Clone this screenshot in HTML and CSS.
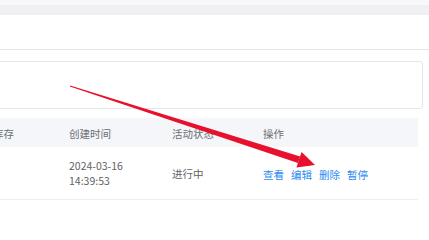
FILE: index.html
```html
<!DOCTYPE html>
<html lang="zh-CN">
<head>
<meta charset="utf-8">
<link rel="stylesheet" href="styles.css">
</head>
<body>
<div class="page">
  <div class="topstrip"></div>
  <div class="band"></div>
  <div class="toolbar"></div>
  <div class="content">
    <div class="filterbox"></div>
    <div class="table">
      <div class="row head">
        <div class="cell c1">库存</div>
        <div class="cell c2">创建时间</div>
        <div class="cell c3">活动状态</div>
        <div class="cell c4">操作</div>
      </div>
      <div class="row body">
        <div class="cell c1"></div>
        <div class="cell c2"><div>2024-03-16</div><div>14:39:53</div></div>
        <div class="cell c3">进行中</div>
        <div class="cell c4 actions"><a class="act">查看</a><a class="act">编辑</a><a class="act">删除</a><a class="act">暂停</a></div>
      </div>
    </div>
  </div>
  <svg class="arrow" width="429" height="201" viewBox="0 0 429 201" xmlns="http://www.w3.org/2000/svg">
    <polygon points="69.85,86.48 70.15,85.52 300.2,156.6 298.0,162.9" fill="#e8112d"/>
    <polygon points="301.6,151.9 315,165 296.4,167.4" fill="#e8112d"/>
  </svg>
</div>
</body>
</html>
```
FILE: styles.css
```css
html, body {
  margin: 0;
  padding: 0;
  background: #ffffff;
}
body {
  width: 429px;
  height: 201px;
  overflow: hidden;
  font-family: "Noto Sans CJK SC", "Noto Sans", sans-serif;
  font-size: 10.5px;
  color: #606266;
}
.page {
  position: relative;
  width: 429px;
  height: 201px;
  overflow: hidden;
}
.topstrip {
  height: 5px;
  background: #f8f8fa;
}
.band {
  height: 10px;
  background: #f0f0f4;
}
.toolbar {
  height: 34px;
  background: #ffffff;
  border-bottom: 1px solid #e6e6e8;
}
.content {
  padding-top: 11px;
  display: flex;
  flex-direction: column;
  gap: 9px;
}
.filterbox {
  height: 46px;
  margin-left: -10px;
  margin-right: 6px;
  border: 1px solid #e4e7ed;
  border-radius: 3px;
  background: #ffffff;
}
.table {
  margin-left: -17px;
  margin-right: 11px;
}
.row {
  display: grid;
  grid-template-columns: 76px 103px 91px 1fr;
  align-items: center;
}
.row.head {
  height: 29px;
  background: #f5f6f9;
  color: #6b6e75;
}
.row.body {
  height: 52px;
  border-bottom: 1px solid #ebeef5;
}
.cell {
  padding-left: 10px;
  white-space: nowrap;
  line-height: 15px;
}
.row.head .cell {
  padding-top: 1px;
}
.row.body .c2 {
  padding-top: 0px;
}
.row.body .c3 {
  padding-top: 0px;
}
.actions {
  display: flex;
  gap: 7px;
  padding-top: 3px;
}
.act {
  color: #2d8cf0;
  text-decoration: none;
}
.arrow {
  position: absolute;
  left: 0;
  top: 0;
  pointer-events: none;
}
```
